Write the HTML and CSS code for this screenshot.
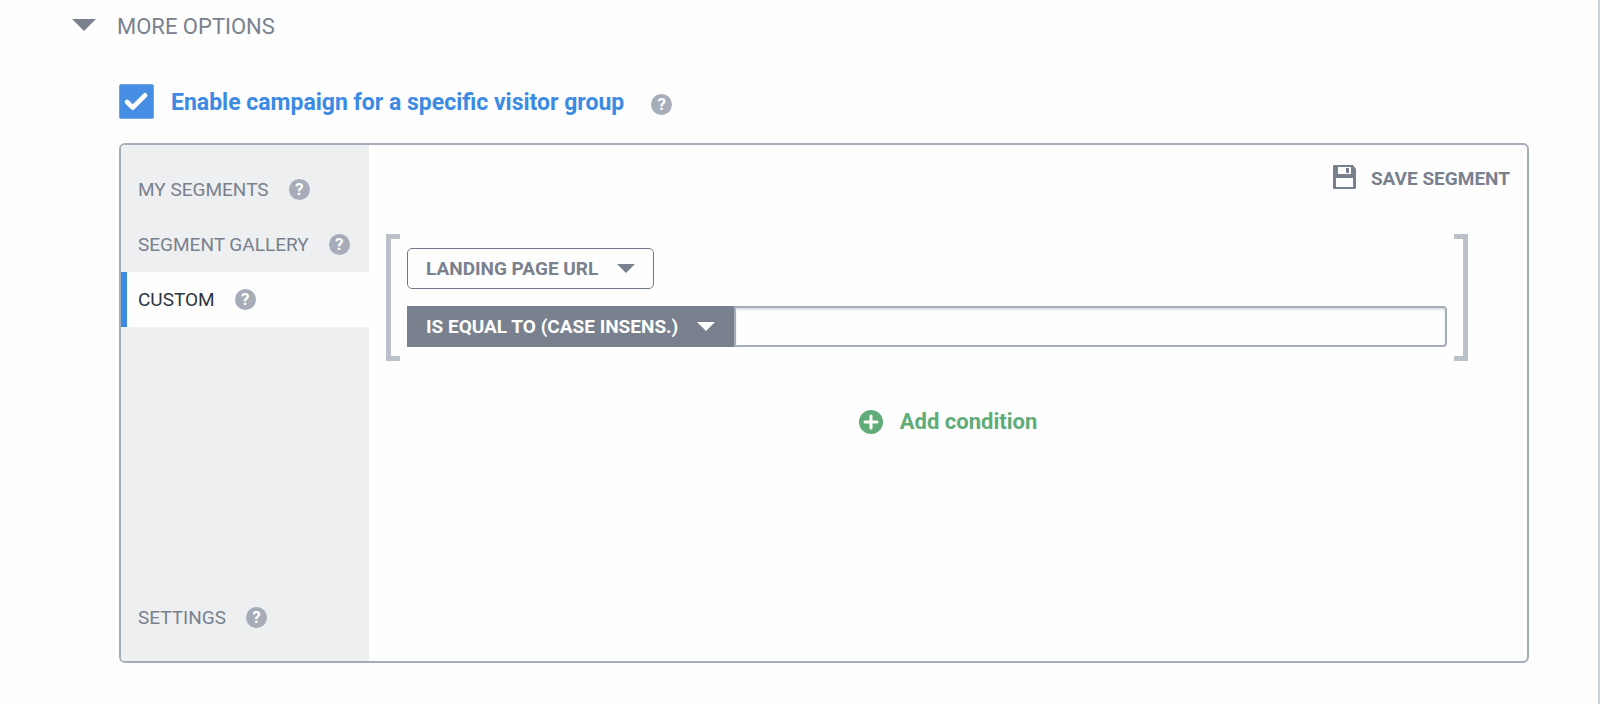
FILE: index.html
```html
<!DOCTYPE html>
<html lang="en">
<head>
<meta charset="utf-8">
<meta name="viewport" content="width=device-width, initial-scale=1">
<title>More options</title>
<link rel="stylesheet" href="styles.css">
</head>
<body>
<main class="page">
  <button class="disclosure" type="button" aria-expanded="true">
    <svg class="disclosure-arrow" viewBox="0 0 24 12" aria-hidden="true"><path d="M0 0h24L12 12z"/></svg>
    <span>MORE OPTIONS</span>
  </button>

  <section class="options">
    <div class="enable">
      <input class="enable-box" type="checkbox" id="enable" checked>
      <label class="enable-label" for="enable">Enable campaign for a specific visitor group</label>
      <button class="help" type="button" aria-label="Help: visitor group">?</button>
    </div>

    <div class="panel">
      <nav class="sidebar">
        <div class="tab"><a href="#my-segments">MY SEGMENTS</a><button class="help" type="button" aria-label="Help: my segments">?</button></div>
        <div class="tab"><a href="#gallery">SEGMENT GALLERY</a><button class="help" type="button" aria-label="Help: segment gallery">?</button></div>
        <div class="tab tab-active"><a href="#custom">CUSTOM</a><button class="help" type="button" aria-label="Help: custom">?</button></div>
        <div class="tab tab-last"><a href="#settings">SETTINGS</a><button class="help" type="button" aria-label="Help: settings">?</button></div>
      </nav>

      <div class="editor">
        <button class="save" type="button">
          <svg class="save-icon" viewBox="0 0 24 24" aria-hidden="true"><path fill-rule="evenodd" d="M1 0h19l3 4v19a1 1 0 0 1-1 1H1a1 1 0 0 1-1-1V1a1 1 0 0 1 1-1zM5 2v7h13V2zM3 13v9h17v-9zM13 3h3v5h-3z"/></svg>
          <span>SAVE SEGMENT</span>
        </button>

        <div class="group">
          <div class="bracket bracket-left"></div>
          <div class="conditions">
            <button class="field" type="button" aria-haspopup="listbox">
              <span>LANDING PAGE URL</span>
              <svg class="caret" viewBox="0 0 18 9" aria-hidden="true"><path d="M0 0h18L9 9z"/></svg>
            </button>
            <div class="rule">
              <button class="operator" type="button" aria-haspopup="listbox">
                <span>IS EQUAL TO (CASE INSENS.)</span>
                <svg class="caret" viewBox="0 0 18 9" aria-hidden="true"><path d="M0 0h18L9 9z"/></svg>
              </button>
              <input class="value" type="text" aria-label="Landing page URL value">
            </div>
          </div>
          <div class="bracket bracket-right"></div>
        </div>

        <button class="add" type="button">
          <svg class="add-icon" viewBox="0 0 24 24" aria-hidden="true"><circle cx="12" cy="12" r="12"/><path d="M12 6v12M6 12h12"/></svg>
          <span>Add condition</span>
        </button>
      </div>
    </div>
  </section>
</main>
</body>
</html>
```
FILE: styles.css
```css
* {
  box-sizing: border-box;
}

body {
  margin: 0;
  background: #fefefe;
  color: #79818f;
  font-family: Roboto, "Liberation Sans", sans-serif;
}

button {
  margin: 0;
  padding: 0;
  border: 0;
  background: none;
  color: inherit;
  font: inherit;
  cursor: pointer;
}

svg {
  display: block;
  flex: none;
  fill: currentColor;
}

.page {
  min-height: 100vh;
  padding: 13px 69px 40px 72px;
  border-right: 2px solid #ccd1d8;
}

.disclosure {
  display: flex;
  align-items: flex-start;
  gap: 21px;
  font-size: 22px;
  line-height: 28px;
}

.disclosure-arrow {
  width: 24px;
  height: 12px;
  margin-top: 6px;
}

.options {
  padding: 43px 0 0 47px;
}

.enable {
  display: flex;
  align-items: center;
}

.enable-box {
  flex: none;
  width: 35px;
  height: 35px;
  margin: 0 17px 0 0;
  appearance: none;
  border: 1px solid #6fa5e6;
  border-radius: 2px;
  background: #468ee3 url("data:image/svg+xml,%3Csvg xmlns='http://www.w3.org/2000/svg' viewBox='0 0 34 35'%3E%3Cpath d='M7 18l6 6L26 11' fill='none' stroke='white' stroke-width='5' stroke-linecap='round' stroke-linejoin='round'/%3E%3C/svg%3E") center / 100% 100% no-repeat;
}

.enable-label {
  padding-top: 2px;
  color: #3b8ae3;
  font-size: 23px;
  font-weight: 700;
  line-height: 28px;
}

.help {
  flex: none;
  width: 21px;
  height: 21px;
  margin-left: 20px;
  border-radius: 50%;
  background: #a6adb8;
  color: #fff;
  font-size: 17px;
  font-weight: 700;
  line-height: 21px;
  text-align: center;
}

.enable .help {
  margin-top: 6px;
  margin-left: 27px;
}

.panel {
  display: flex;
  min-height: 520px;
  margin-top: 24px;
  overflow: hidden;
  border: 2px solid #a6adba;
  border-radius: 6px;
}

.sidebar {
  display: flex;
  flex: none;
  flex-direction: column;
  width: 248px;
  padding: 17px 0 16px;
  background: #edeff1;
}

.tab {
  display: flex;
  align-items: center;
  height: 55px;
  padding-left: 11px;
  border-left: 6px solid transparent;
  font-size: 19px;
}

.tab a {
  color: inherit;
  text-decoration: none;
}

.tab-active {
  border-left-color: #3b8ae3;
  background: #fefefe;
  color: #2c3642;
}

.tab-last {
  margin-top: auto;
}

.editor {
  display: flex;
  flex: 1;
  flex-direction: column;
  min-width: 0;
}

.save {
  display: flex;
  align-items: flex-start;
  align-self: flex-end;
  gap: 14px;
  margin: 20px 17px 0 0;
  font-size: 19px;
  font-weight: 700;
  line-height: 28px;
}

.save-icon {
  width: 24px;
  height: 24px;
}

.group {
  display: flex;
  gap: 7px;
  margin: 41px 59px 0 17px;
}

.bracket {
  flex: none;
  width: 14px;
  border: 5px solid #bbc0c9;
}

.bracket-left {
  border-right: 0;
}

.bracket-right {
  border-left: 0;
}

.conditions {
  display: flex;
  flex: 1;
  flex-direction: column;
  gap: 17px;
  min-width: 0;
  padding: 14px 0;
}

.field,
.operator {
  display: flex;
  align-items: center;
  gap: 19px;
  height: 41px;
  font-size: 19px;
  font-weight: 700;
  white-space: nowrap;
}

.field {
  align-self: flex-start;
  padding: 0 18px;
  border: 1px solid #6f7887;
  border-radius: 5px;
}

.operator {
  flex: none;
  padding: 0 19px;
  background: #79818f;
  color: #fff;
}

.caret {
  width: 18px;
  height: 9px;
}

.rule {
  display: flex;
}

.value {
  flex: 1;
  min-width: 0;
  padding: 0 12px;
  border: 2px solid #a6adba;
  border-radius: 0 4px 4px 0;
  background: #fefefe;
  box-shadow: inset 0 2px 2px #e2e2e4;
  color: #2c3642;
  font: inherit;
  font-size: 19px;
}

.add {
  display: flex;
  align-items: center;
  align-self: center;
  gap: 17px;
  margin-top: 47px;
  color: #60ac78;
  font-size: 22px;
  font-weight: 700;
  line-height: 28px;
}

.add-icon {
  width: 24px;
  height: 24px;
}

.add-icon path {
  stroke: #fff;
  stroke-width: 3;
  stroke-linecap: round;
}
```
